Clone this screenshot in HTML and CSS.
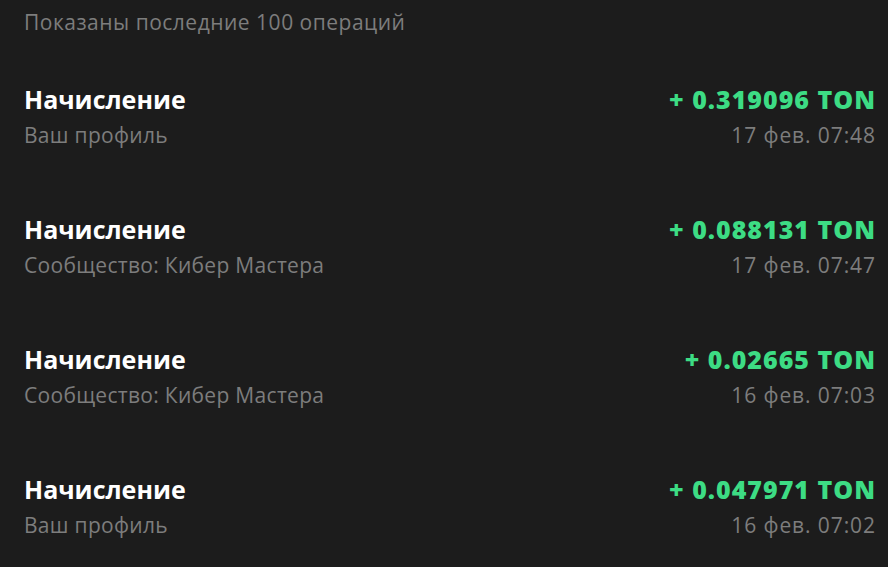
FILE: index.html
```html
<!DOCTYPE html>
<html lang="ru">
<head>
<meta charset="utf-8">
<link rel="stylesheet" href="styles.css">
</head>
<body>
<div class="page">
  <div class="note">Показаны последние 100 операций</div>
  <ul class="list">
    <li class="item">
      <div class="left"><div class="title">Начисление</div><div class="sub">Ваш профиль</div></div>
      <div class="right"><div class="amount">+ 0.319096 TON</div><div class="date">17 фев. 07:48</div></div>
    </li>
    <li class="item">
      <div class="left"><div class="title">Начисление</div><div class="sub">Сообщество: Кибер Мастера</div></div>
      <div class="right"><div class="amount">+ 0.088131 TON</div><div class="date">17 фев. 07:47</div></div>
    </li>
    <li class="item">
      <div class="left"><div class="title">Начисление</div><div class="sub">Сообщество: Кибер Мастера</div></div>
      <div class="right"><div class="amount">+ 0.02665 TON</div><div class="date">16 фев. 07:03</div></div>
    </li>
    <li class="item">
      <div class="left"><div class="title">Начисление</div><div class="sub">Ваш профиль</div></div>
      <div class="right"><div class="amount">+ 0.047971 TON</div><div class="date">16 фев. 07:02</div></div>
    </li>
  </ul>
</div>
</body>
</html>
```
FILE: styles.css
```css
html, body {
  margin: 0;
  padding: 0;
  background: #1c1c1c;
  height: 100%;
}
body {
  font-family: "Open Sans", "Noto Sans", sans-serif;
}
.page {
  padding: 8px 13px 0 24px;
}
.note {
  color: #7d7d7d;
  font-size: 21px;
  line-height: 28px;
  letter-spacing: 0.5px;
}
.list {
  list-style: none;
  margin: 0;
  padding: 0;
  margin-top: 47px;
  display: flex;
  flex-direction: column;
  gap: 64px;
}
.item {
  display: flex;
  justify-content: space-between;
  height: 66px;
}
.right {
  text-align: right;
}
.title {
  color: #ffffff;
  font-weight: 700;
  font-size: 25px;
  line-height: 32px;
}
.amount {
  color: #3ddc84;
  font-weight: 800;
  font-size: 25px;
  line-height: 32px;
  letter-spacing: 1px;
  margin-right: -1px;
}
.sub, .date {
  color: #7d7d7d;
  font-size: 21px;
  line-height: 28px;
  margin-top: 6px;
}
.sub {
  letter-spacing: 0.3px;
}
.date {
  letter-spacing: 0.9px;
  margin-right: -0.9px;
}
```
